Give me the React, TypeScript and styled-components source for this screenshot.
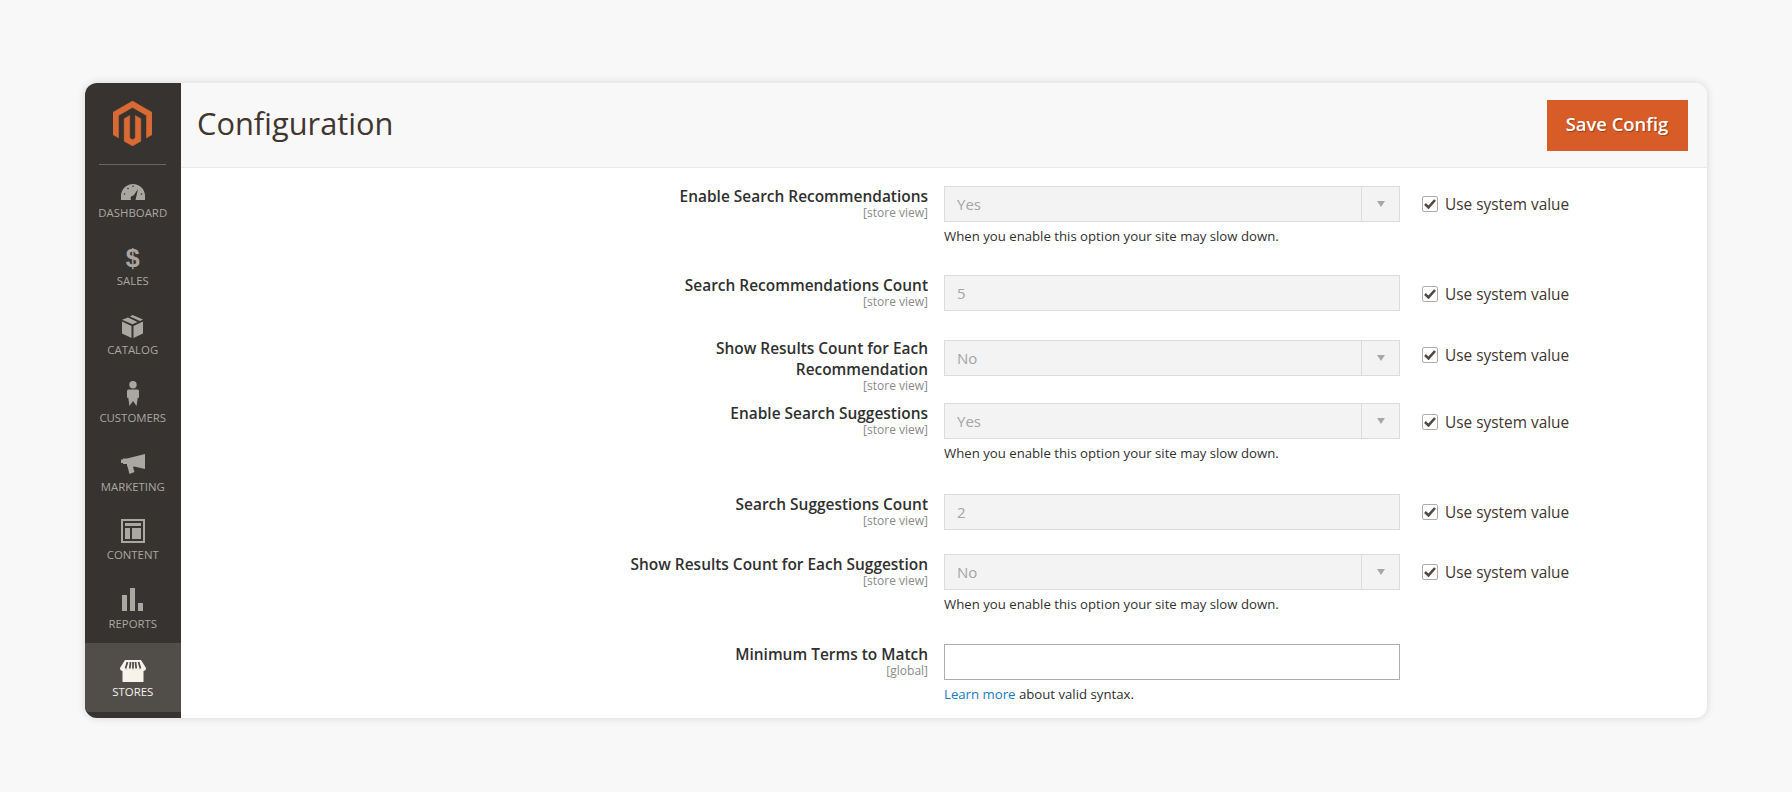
import React from 'react';
import styled, { createGlobalStyle } from 'styled-components';

const GlobalStyle = createGlobalStyle`
    html, body {
        margin: 0;
        padding: 0;
        background: #f8f8f8;
        font-family: "Open Sans", "Liberation Sans", sans-serif;
    }
`;

const Page = styled.div`
    width: 1792px;
    height: 792px;
    padding: 83px 85px 0 84.5px;
    box-sizing: border-box;
`;

const Card = styled.div`
    display: flex;
    width: 1622px;
    height: 635px;
    background: #fff;
    border-radius: 12px;
    overflow: hidden;
    box-shadow: 0 0 8px rgba(0, 0, 0, 0.14);
`;

const Sidebar = styled.nav`
    width: 96.5px;
    flex: none;
    background: #373330;
    display: flex;
    flex-direction: column;
    align-items: center;
`;

const LogoBox = styled.div`
    width: 100%;
    height: 81px;
    flex: none;
    display: flex;
    align-items: flex-start;
    justify-content: center;
    padding-top: 17.5px;
    box-sizing: border-box;
`;

const Divider = styled.div`
    width: 67px;
    height: 1px;
    flex: none;
    background: #6b6661;
    margin-bottom: -2px;
`;

const NavItem = styled.div<{ $active?: boolean }>`
    width: 100%;
    height: 68.57px;
    flex: none;
    display: flex;
    flex-direction: column;
    align-items: center;
    justify-content: flex-start;
    padding-top: 14.5px;
    box-sizing: border-box;
    background: ${(p) => (p.$active ? '#514d49' : 'transparent')};
    color: ${(p) => (p.$active ? '#f7f3eb' : '#aaa6a0')};
`;

const NavIcon = styled.div<{ $lift: number }>`
    height: 27px;
    box-sizing: border-box;
    padding-bottom: ${(p) => p.$lift * 2}px;
    display: flex;
    align-items: center;
    justify-content: center;
`;

const NavLabel = styled.span`
    font-size: 11.4px;
    line-height: 16px;
`;

const DollarGlyph = styled.span`
    font-family: "Liberation Sans", sans-serif;
    font-size: 25px;
    font-weight: 700;
    line-height: 1;
`;

const Main = styled.main`
    flex: 1;
    display: flex;
    flex-direction: column;
    min-width: 0;
`;

const Header = styled.header`
    height: 85px;
    flex: none;
    box-sizing: border-box;
    background: #f8f8f8;
    border-bottom: 1px solid #e8e8e8;
    display: flex;
    align-items: center;
    justify-content: space-between;
    padding: 0 19px 0 16px;
`;

const Title = styled.h1`
    margin: 0 0 5px;
    font-size: 30.8px;
    font-weight: 400;
    color: #41362f;
`;

const SaveButton = styled.button`
    width: 141px;
    height: 51px;
    border: none;
    padding: 0 0 3px;
    background: #d85c27;
    color: #fff;
    font-family: inherit;
    font-size: 18.4px;
    font-weight: 600;
    text-shadow: 1px 1px 1px rgba(0, 0, 0, 0.3);
`;

const Form = styled.div`
    padding-top: 18px;
    display: flex;
    flex-direction: column;
`;

const Row = styled.div<{ $bottom: number }>`
    display: grid;
    grid-template-columns: 370px 456px 1fr;
    column-gap: 16px;
    padding-left: 377px;
    margin-bottom: ${(p) => p.$bottom}px;
    align-items: start;
`;

const LabelCell = styled.div<{ $raise?: number }>`
    text-align: right;
    margin-left: auto;
    margin-top: ${(p) => -(p.$raise ?? 0)}px;
    width: 310px;
`;

const LabelText = styled.div`
    font-size: 15.45px;
    line-height: 21.6px;
    font-weight: 600;
    color: #303030;
`;

const Scope = styled.div`
    font-size: 12px;
    line-height: 14px;
    margin-top: -2px;
    color: #8a8a8a;
`;

const Field = styled.div<{ $enabled?: boolean }>`
    height: 36px;
    box-sizing: border-box;
    display: flex;
    align-items: center;
    background: ${(p) => (p.$enabled ? '#fff' : '#f3f3f3')};
    border: 1px solid ${(p) => (p.$enabled ? '#adadad' : '#dcdcdc')};
    color: #a5a5a5;
    font-size: 15px;
    padding-left: 12px;
`;

const FieldValue = styled.span`
    flex: 1;
`;

const Caret = styled.div`
    width: 37px;
    height: 100%;
    flex: none;
    border-left: 1px solid #dcdcdc;
    display: flex;
    align-items: center;
    justify-content: center;
    &::after {
        content: '';
        border-left: 4.5px solid transparent;
        border-right: 4.5px solid transparent;
        border-top: 6px solid #a8a8a8;
    }
`;

const Help = styled.div`
    font-size: 13.2px;
    line-height: 18px;
    margin-top: 5px;
    color: #303030;
`;

const LearnMore = styled.span`
    color: #1979c3;
`;

const SystemValue = styled.div<{ $offset: number }>`
    display: flex;
    align-items: center;
    gap: 7px;
    height: 36px;
    margin: ${(p) => p.$offset}px 0 0 6px;
    font-size: 15.4px;
    color: #41362f;
`;

const CheckBox = styled.span`
    width: 16px;
    height: 16px;
    flex: none;
    box-sizing: border-box;
    background: #fff;
    border: 1px solid #adadad;
    border-radius: 2px;
    display: flex;
    align-items: center;
    justify-content: center;
`;

const Dashboard = () => (
    <svg width="24" height="17" viewBox="0 0 24 17">
        <path fill="currentColor" d="M0 17V13A12 12 0 0 1 24 13V17H14.500L17 6 12.600 12.400A2.800 2.800 0 0 0 10.200 17Z" />
        <g fill="#373330">
            <circle cx="3.500" cy="11" r=".8" />
            <circle cx="7" cy="5.500" r=".8" />
            <circle cx="12" cy="3.200" r=".8" />
            <circle cx="20.500" cy="11" r=".8" />
        </g>
    </svg>
);

const Box = () => (
    <svg width="21" height="23" viewBox="0 0 21 23">
        <path fill="currentColor" d="M10.500 0 21 4.500 18 6 8 1.500ZM6 2.500 15.500 7 10.500 9.300 0 4.800ZM0 6.500 9.500 11V23L0 18.500ZM21 6.500V18.500L11.500 23V11Z" />
    </svg>
);

const Person = () => (
    <svg width="14" height="25" viewBox="0 0 14 25">
        <circle cx="7" cy="3.700" r="3.700" fill="currentColor" />
        <path fill="currentColor" d="M2.500 8.500H11.500Q13 8.500 13 10V17L11.800 16.500 10.500 25 7 20 3.500 25 2.200 16.500 1 17V10Q1 8.500 2.500 8.500Z" />
    </svg>
);

const Megaphone = () => (
    <svg width="24" height="20" viewBox="0 0 24 20">
        <path fill="currentColor" d="M0 5.500H2V4.500H6L24 0V15L13 12.500 12 13 13.500 18 8.500 20 6.500 12.500 6 12V10H2V9H0Z" />
    </svg>
);

const Layout = () => (
    <svg width="24" height="24" viewBox="0 0 24 24">
        <path fill="currentColor" fillRule="evenodd" d="M0 0H24V24H0ZM2 2V22H22V2ZM4 4H20V7H4ZM4 9H9V20H4ZM11 9H20V20H11Z" />
    </svg>
);

const Bars = () => (
    <svg width="21" height="23" viewBox="0 0 21 23">
        <path fill="currentColor" d="M0 7H5V23H0ZM8 0H13V23H8ZM16 15H21V23H16Z" />
    </svg>
);

const Store = () => (
    <svg width="26" height="22" viewBox="0 0 26 22">
        <path fill="currentColor" d="M2.500 10H23.500V22H2.500Z" />
        <path fill="currentColor" d="M5 0H21L26 8Q26 11 23 11 20.500 11 19.500 9.500 18 11 16 11 14.500 11 13 9.500 11.500 11 10 11 8 11 6.500 9.500 5.500 11 3 11 0 11 0 8Z" />
        <path stroke="#514d49" strokeWidth="1.800" d="M7.500 2 5.500 8.500M10.500 2 9.800 8.500M15.500 2 16.200 8.500M18.500 2 20.500 8.500M13 2V8.500" />
    </svg>
);

const Logo = () => (
    <svg width="39" height="45" viewBox="1.6 0 20.8 24">
        <path fill="#d96a33" stroke="#d96a33" strokeWidth=".25" d="M12 24l-4.455-2.572v-12l2.970-1.715v12.001l1.485.902 1.485-.902V7.713l2.971 1.715v12zM22.391 6v12l-2.969 1.714V7.713L12 3.430 4.574 7.713v12.001L1.609 18V6L12.001 0z" />
    </svg>
);

const Tick = () => (
    <svg width="12" height="10" viewBox="0 0 12 10">
        <path fill="none" stroke="#514943" strokeWidth="2.600" d="M1 5l3.500 3.400L11 1" />
    </svg>
);

const navItems = [
    { label: 'DASHBOARD', lift: 0, icon: <Dashboard /> },
    { label: 'SALES', lift: 1.5, icon: <DollarGlyph>$</DollarGlyph> },
    { label: 'CATALOG', lift: 2, icon: <Box /> },
    { label: 'CUSTOMERS', lift: 3.5, icon: <Person /> },
    { label: 'MARKETING', lift: 1, icon: <Megaphone /> },
    { label: 'CONTENT', lift: 3, icon: <Layout /> },
    { label: 'REPORTS', lift: 3, icon: <Bars /> },
    { label: 'STORES', lift: 0, icon: <Store />, active: true },
];

const slowHelp = 'When you enable this option your site may slow down.';

interface FieldRow {
    label: string;
    scope: string;
    value: string;
    select?: boolean;
    help?: string;
    bottom: number;
    system?: boolean;
    offset?: number;
    raise?: number;
}

const rows: FieldRow[] = [
    { label: 'Enable Search Recommendations', scope: '[store view]', value: 'Yes', select: true, help: slowHelp, bottom: 30, system: true },
    { label: 'Search Recommendations Count', scope: '[store view]', value: '5', bottom: 27.5, system: true, offset: 1 },
    { label: 'Show Results Count for Each Recommendation', scope: '[store view]', value: 'No', select: true, bottom: 10.5, system: true, offset: -2.5, raise: 2 },
    { label: 'Enable Search Suggestions', scope: '[store view]', value: 'Yes', select: true, help: slowHelp, bottom: 32, system: true, offset: 1 },
    { label: 'Search Suggestions Count', scope: '[store view]', value: '2', bottom: 24, system: true },
    { label: 'Show Results Count for Each Suggestion', scope: '[store view]', value: 'No', select: true, help: slowHelp, bottom: 31, system: true },
    { label: 'Minimum Terms to Match', scope: '[global]', value: '', bottom: 0 },
];

function App() {
    return (
        <Page>
            <GlobalStyle />
            <Card>
                <Sidebar>
                    <LogoBox>
                        <Logo />
                    </LogoBox>
                    <Divider />
                    {navItems.map((item) => (
                        <NavItem key={item.label} $active={item.active}>
                            <NavIcon $lift={item.lift}>{item.icon}</NavIcon>
                            <NavLabel>{item.label}</NavLabel>
                        </NavItem>
                    ))}
                </Sidebar>
                <Main>
                    <Header>
                        <Title>Configuration</Title>
                        <SaveButton>Save Config</SaveButton>
                    </Header>
                    <Form>
                        {rows.map((row) => (
                            <Row key={row.label} $bottom={row.bottom}>
                                <LabelCell $raise={row.raise}>
                                    <LabelText>{row.label}</LabelText>
                                    <Scope>{row.scope}</Scope>
                                </LabelCell>
                                <div>
                                    <Field $enabled={!row.system}>
                                        <FieldValue>{row.value}</FieldValue>
                                        {row.select && <Caret />}
                                    </Field>
                                    {row.help && <Help>{row.help}</Help>}
                                    {!row.system && (
                                        <Help>
                                            <LearnMore>Learn more</LearnMore> about valid syntax.
                                        </Help>
                                    )}
                                </div>
                                {row.system && (
                                    <SystemValue $offset={row.offset ?? 0}>
                                        <CheckBox>
                                            <Tick />
                                        </CheckBox>
                                        Use system value
                                    </SystemValue>
                                )}
                            </Row>
                        ))}
                    </Form>
                </Main>
            </Card>
        </Page>
    );
}

export default App;
